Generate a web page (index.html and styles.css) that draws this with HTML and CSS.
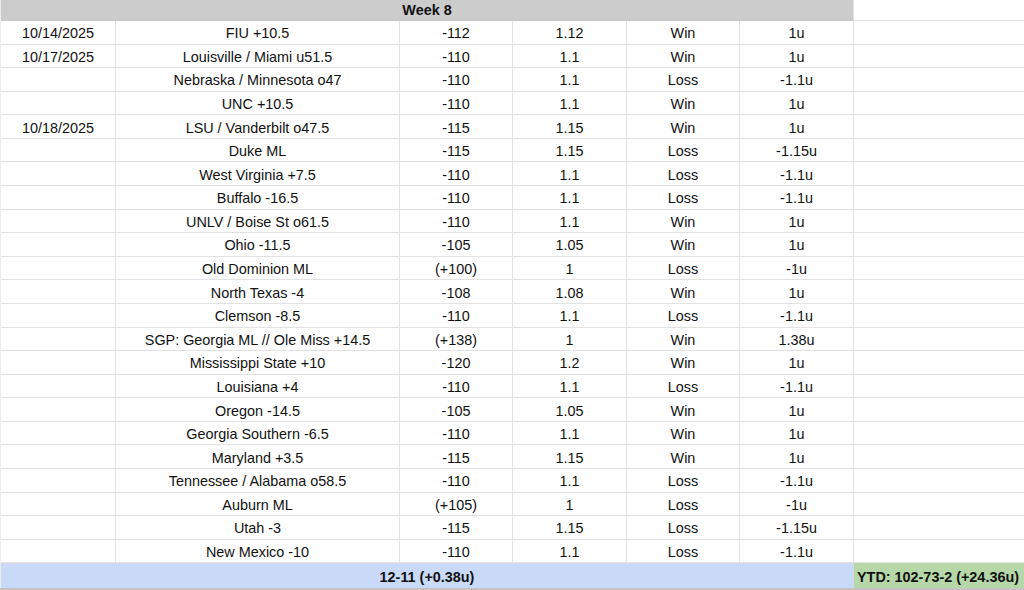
FILE: index.html
```html
<!DOCTYPE html>
<html>
<head>
<meta charset="utf-8">
<link rel="stylesheet" href="styles.css">
</head>
<body>
<div class="sheet">
  <div class="cell head span6">Week 8</div>
  <div class="cell blank"></div>

  <div class="cell">10/14/2025</div><div class="cell">FIU +10.5</div><div class="cell">-112</div><div class="cell">1.12</div><div class="cell">Win</div><div class="cell">1u</div><div class="cell blank"></div>
  <div class="cell">10/17/2025</div><div class="cell">Louisville / Miami u51.5</div><div class="cell">-110</div><div class="cell">1.1</div><div class="cell">Win</div><div class="cell">1u</div><div class="cell blank"></div>
  <div class="cell"></div><div class="cell">Nebraska / Minnesota o47</div><div class="cell">-110</div><div class="cell">1.1</div><div class="cell">Loss</div><div class="cell">-1.1u</div><div class="cell blank"></div>
  <div class="cell"></div><div class="cell">UNC +10.5</div><div class="cell">-110</div><div class="cell">1.1</div><div class="cell">Win</div><div class="cell">1u</div><div class="cell blank"></div>
  <div class="cell">10/18/2025</div><div class="cell">LSU / Vanderbilt o47.5</div><div class="cell">-115</div><div class="cell">1.15</div><div class="cell">Win</div><div class="cell">1u</div><div class="cell blank"></div>
  <div class="cell"></div><div class="cell">Duke ML</div><div class="cell">-115</div><div class="cell">1.15</div><div class="cell">Loss</div><div class="cell">-1.15u</div><div class="cell blank"></div>
  <div class="cell"></div><div class="cell">West Virginia +7.5</div><div class="cell">-110</div><div class="cell">1.1</div><div class="cell">Loss</div><div class="cell">-1.1u</div><div class="cell blank"></div>
  <div class="cell"></div><div class="cell">Buffalo -16.5</div><div class="cell">-110</div><div class="cell">1.1</div><div class="cell">Loss</div><div class="cell">-1.1u</div><div class="cell blank"></div>
  <div class="cell"></div><div class="cell">UNLV / Boise St o61.5</div><div class="cell">-110</div><div class="cell">1.1</div><div class="cell">Win</div><div class="cell">1u</div><div class="cell blank"></div>
  <div class="cell"></div><div class="cell">Ohio -11.5</div><div class="cell">-105</div><div class="cell">1.05</div><div class="cell">Win</div><div class="cell">1u</div><div class="cell blank"></div>
  <div class="cell"></div><div class="cell">Old Dominion ML</div><div class="cell">(+100)</div><div class="cell">1</div><div class="cell">Loss</div><div class="cell">-1u</div><div class="cell blank"></div>
  <div class="cell"></div><div class="cell">North Texas -4</div><div class="cell">-108</div><div class="cell">1.08</div><div class="cell">Win</div><div class="cell">1u</div><div class="cell blank"></div>
  <div class="cell"></div><div class="cell">Clemson -8.5</div><div class="cell">-110</div><div class="cell">1.1</div><div class="cell">Loss</div><div class="cell">-1.1u</div><div class="cell blank"></div>
  <div class="cell"></div><div class="cell">SGP: Georgia ML // Ole Miss +14.5</div><div class="cell">(+138)</div><div class="cell">1</div><div class="cell">Win</div><div class="cell">1.38u</div><div class="cell blank"></div>
  <div class="cell"></div><div class="cell">Mississippi State +10</div><div class="cell">-120</div><div class="cell">1.2</div><div class="cell">Win</div><div class="cell">1u</div><div class="cell blank"></div>
  <div class="cell"></div><div class="cell">Louisiana +4</div><div class="cell">-110</div><div class="cell">1.1</div><div class="cell">Loss</div><div class="cell">-1.1u</div><div class="cell blank"></div>
  <div class="cell"></div><div class="cell">Oregon -14.5</div><div class="cell">-105</div><div class="cell">1.05</div><div class="cell">Win</div><div class="cell">1u</div><div class="cell blank"></div>
  <div class="cell"></div><div class="cell">Georgia Southern -6.5</div><div class="cell">-110</div><div class="cell">1.1</div><div class="cell">Win</div><div class="cell">1u</div><div class="cell blank"></div>
  <div class="cell"></div><div class="cell">Maryland +3.5</div><div class="cell">-115</div><div class="cell">1.15</div><div class="cell">Win</div><div class="cell">1u</div><div class="cell blank"></div>
  <div class="cell"></div><div class="cell">Tennessee / Alabama o58.5</div><div class="cell">-110</div><div class="cell">1.1</div><div class="cell">Loss</div><div class="cell">-1.1u</div><div class="cell blank"></div>
  <div class="cell"></div><div class="cell">Auburn ML</div><div class="cell">(+105)</div><div class="cell">1</div><div class="cell">Loss</div><div class="cell">-1u</div><div class="cell blank"></div>
  <div class="cell"></div><div class="cell">Utah -3</div><div class="cell">-115</div><div class="cell">1.15</div><div class="cell">Loss</div><div class="cell">-1.15u</div><div class="cell blank"></div>
  <div class="cell"></div><div class="cell">New Mexico -10</div><div class="cell">-110</div><div class="cell">1.1</div><div class="cell">Loss</div><div class="cell">-1.1u</div><div class="cell blank"></div>

  <div class="cell total span6">12-11 (+0.38u)</div>
  <div class="cell ytd">YTD: 102-73-2 (+24.36u)</div>
</div>
<div class="next"></div>
</body>
</html>
```
FILE: styles.css
```css
html, body {
  margin: 0;
  padding: 0;
  background: #ffffff;
}
body {
  font-family: "Liberation Sans", Arial, sans-serif;
  font-size: 14.4px;
  color: #111111;
  width: 1024px;
  height: 590px;
  overflow: hidden;
}
.sheet {
  display: grid;
  grid-template-columns: 115px 284px 113px 114px 113px 114px 171px;
  grid-template-rows: 21px repeat(23, 23.58px) 25px;
  border-left: 2px solid #ececec;
  margin-left: -1px;
}
.cell {
  box-sizing: border-box;
  border-right: 1px solid #e2e2e2;
  border-bottom: 1px solid #e2e2e2;
  display: flex;
  align-items: center;
  justify-content: center;
  white-space: nowrap;
  overflow: hidden;
  padding-top: 2px;
}
.blank {
  border-right: none;
}
.span6 {
  grid-column: span 6;
}
.head {
  background: #cccccc;
  font-weight: bold;
  border-bottom: 1px solid #c4c4c4;
  padding-top: 0;
}
.total {
  background: #c9daf8;
  font-weight: bold;
  border-top: 1px solid #d3dae6;
  border-bottom: none;
  border-right: 1px solid #d0d8e6;
}
.ytd {
  background: #b6d7a8;
  font-weight: bold;
  justify-content: flex-start;
  padding-left: 3px;
  border-bottom: none;
  border-right: none;
}
.next {
  height: 3px;
  background: #c3c3c3;
}
```
